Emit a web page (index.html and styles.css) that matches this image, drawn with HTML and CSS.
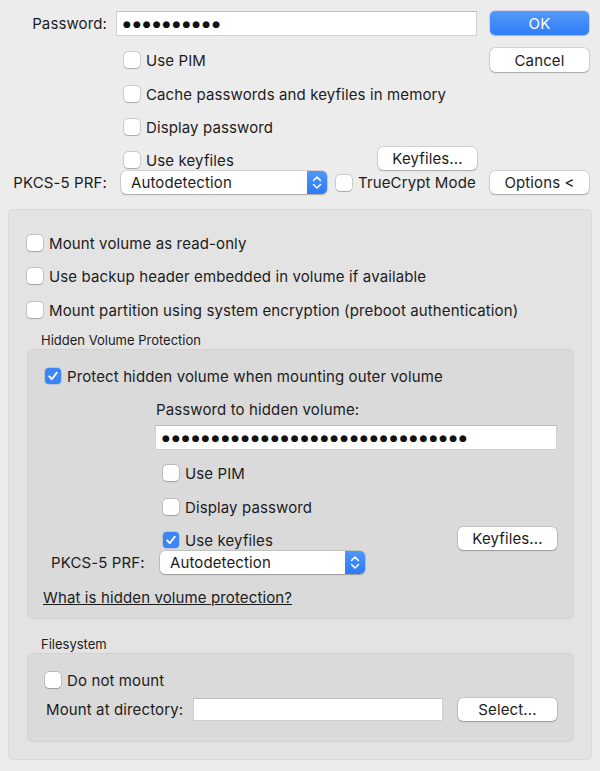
FILE: index.html
```html
<!DOCTYPE html>
<html>
<head>
<meta charset="utf-8">
<link rel="stylesheet" href="styles.css">
</head>
<body>
<div class="top">
  <div class="trow r1">
    <div class="tlabel">Password:</div>
    <div class="tmain"><div class="field wide"><span class="dots">●●●●●●●●●●</span></div></div>
    <div class="tside"><div class="btn primary">OK</div></div>
  </div>
  <div class="trow r2">
    <div class="tlabel"></div>
    <div class="tmain"><div class="check indent"><span class="box"></span>Use PIM</div></div>
    <div class="tside"><div class="btn">Cancel</div></div>
  </div>
  <div class="trow r3">
    <div class="tlabel"></div>
    <div class="tmain"><div class="check indent"><span class="box"></span>Cache passwords and keyfiles in memory</div></div>
  </div>
  <div class="trow r4">
    <div class="tlabel"></div>
    <div class="tmain"><div class="check indent"><span class="box"></span>Display password</div></div>
  </div>
  <div class="trow r5">
    <div class="tlabel"></div>
    <div class="tmain split"><div class="check indent low"><span class="box"></span>Use keyfiles</div><div class="btn">Keyfiles...</div></div>
  </div>
  <div class="trow r6">
    <div class="tlabel">PKCS-5 PRF:</div>
    <div class="tmain">
      <div class="select top-select"><span>Autodetection</span><span class="stepper"><svg width="20" height="23" viewBox="0 0 20 23"><path d="M6.5 9.5 L10 6 L13.5 9.5 M6.5 13.5 L10 17 L13.5 13.5" fill="none" stroke="#fff" stroke-width="1.5" stroke-linecap="round" stroke-linejoin="round"/></svg></span></div>
      <div class="check tc"><span class="box"></span>TrueCrypt Mode</div>
    </div>
    <div class="tside"><div class="btn">Options &lt;</div></div>
  </div>
</div>

<div class="panel">
  <div class="prow pa"><div class="check"><span class="box"></span>Mount volume as read-only</div></div>
  <div class="prow pb"><div class="check"><span class="box"></span>Use backup header embedded in volume if available</div></div>
  <div class="prow pc"><div class="check"><span class="box"></span>Mount partition using system encryption (preboot authentication)</div></div>

  <div class="grouplabel g1">Hidden Volume Protection</div>
  <div class="groupbox hidden">
    <div class="prow h1"><div class="check"><span class="box on"><svg width="16" height="16" viewBox="0 0 16 16"><path d="M4.2 8.3 L6.8 11.2 L11.8 4.6" fill="none" stroke="#fff" stroke-width="1.8" stroke-linecap="round" stroke-linejoin="round"/></svg></span>Protect hidden volume when mounting outer volume</div></div>
    <div class="prow h2"><div class="hlabel">Password to hidden volume:</div></div>
    <div class="field hfield"><span class="dots">●●●●●●●●●●●●●●●●●●●●●●●●●●●●●●●</span></div>
    <div class="prow h3"><div class="check hindent"><span class="box"></span>Use PIM</div></div>
    <div class="prow h4"><div class="check hindent"><span class="box"></span>Display password</div></div>
    <div class="prow h5 split"><div class="check hindent low"><span class="box on"><svg width="16" height="16" viewBox="0 0 16 16"><path d="M4.2 8.3 L6.8 11.2 L11.8 4.6" fill="none" stroke="#fff" stroke-width="1.8" stroke-linecap="round" stroke-linejoin="round"/></svg></span>Use keyfiles</div><div class="btn">Keyfiles...</div></div>
    <div class="prow h6">
      <div class="plabel">PKCS-5 PRF:</div>
      <div class="select hsel"><span>Autodetection</span><span class="stepper"><svg width="20" height="23" viewBox="0 0 20 23"><path d="M6.5 9.5 L10 6 L13.5 9.5 M6.5 13.5 L10 17 L13.5 13.5" fill="none" stroke="#fff" stroke-width="1.5" stroke-linecap="round" stroke-linejoin="round"/></svg></span></div>
    </div>
    <div class="prow h7"><a class="link">What is hidden volume protection?</a></div>
  </div>

  <div class="grouplabel g2">Filesystem</div>
  <div class="groupbox fs">
    <div class="prow f1"><div class="check"><span class="box"></span>Do not mount</div></div>
    <div class="prow f2">
      <div class="mlabel">Mount at directory:</div>
      <div class="field dirfield"></div>
      <div class="btn selbtn">Select...</div>
    </div>
  </div>
</div>
</body>
</html>
```

FILE: styles.css
```css
* { box-sizing: border-box; }
html, body { margin: 0; padding: 0; }
body {
  width: 600px;
  height: 771px;
  overflow: hidden;
  background: #ececec;
  font-family: Inter, "Noto Sans", "Liberation Sans", sans-serif;
  font-size: 15px;
  letter-spacing: 0.12px;
  color: #1c1c1c;
}

.top { padding-top: 11px; }
.trow { display: flex; align-items: center; height: 24px; }
.r1 { height: 25px; }
.r2 { margin-top: 12px; }
.r3 { margin-top: 10px; }
.r4 { margin-top: 9px; }
.r5 { margin-top: 8px; height: 23px; }
.r6 { margin-top: 1px; height: 23px; }

.tlabel { width: 107px; text-align: right; flex: none; }
.tmain { width: 361px; margin-left: 9px; display: flex; align-items: center; flex: none; height: 100%; }
.tmain.split { justify-content: space-between; }
.tside { width: 99px; margin-left: 13px; flex: none; height: 100%; }

.field {
  background: #fff;
  border: 1px solid #cfcfcf;
  border-top-color: #bdbdbd;
  height: 25px;
  display: flex;
  align-items: center;
  padding-left: 6px;
}
.field.wide { width: 361px; }
.dots {
  font-family: "DejaVu Sans", sans-serif;
  font-size: 9px;
  letter-spacing: 2.05px;
  color: #111;
}

.btn {
  background: #fff;
  border-radius: 5px;
  box-shadow: 0 0 0 0.5px rgba(0,0,0,0.22), 0 1px 1.5px rgba(0,0,0,0.2);
  height: 23px;
  width: 99px;
  display: flex;
  align-items: center;
  justify-content: center;
  flex: none;
}
.r1 .btn, .r2 .btn { height: 24px; }
.btn.primary {
  background: linear-gradient(#559bf9, #2f7cf6);
  color: #fff;
  box-shadow: 0 0 0 0.5px rgba(0,60,200,0.25), 0 1px 1.5px rgba(0,0,0,0.15);
  height: 24px;
}

.check { display: flex; align-items: center; height: 24px; white-space: nowrap; }
.check.indent { margin-left: 8px; }
.check.low { position: relative; top: 1.5px; }
.box {
  width: 16px;
  height: 16px;
  border-radius: 4px;
  background: #fff;
  box-shadow: 0 0 0 0.5px rgba(0,0,0,0.25), 0 0.5px 1px rgba(0,0,0,0.18);
  margin-right: 6px;
  flex: none;
  display: flex;
}
.box.on { background: #3b86f7; box-shadow: 0 0 0 0.5px rgba(0,60,200,0.3); }

.select {
  background: #fff;
  border-radius: 5px;
  box-shadow: 0 0 0 0.5px rgba(0,0,0,0.22), 0 1px 1.5px rgba(0,0,0,0.2);
  height: 23px;
  display: flex;
  align-items: center;
  justify-content: space-between;
  padding-left: 10px;
  flex: none;
}
.top-select { width: 206px; margin-left: 5px; }
.stepper {
  width: 20px;
  height: 23px;
  background: linear-gradient(#4f97f9, #2d7af6);
  border-radius: 0 5px 5px 0;
  display: flex;
}
.check.tc { margin-left: 9px; }

.panel {
  margin: 15px 0 0 8px;
  width: 584px;
  height: 551px;
  background: #e3e3e3;
  border: 1px solid #dadada;
  border-radius: 5px;
  padding: 21px 17px 0 18px;
}
.prow { display: flex; align-items: center; height: 24px; }
.pb { margin-top: 9px; }
.pc { margin-top: 10px; }

.grouplabel { font-size: 13px; letter-spacing: 0; height: 16px; line-height: 16px; margin-left: 14px; }
.g1 { margin-top: 10px; }
.g2 { margin-top: 17px; }

.groupbox {
  margin-top: 1px;
  width: 547px;
  background: #dadada;
  border: 1px solid #d2d2d2;
  border-radius: 5px;
  padding-left: 17px;
  padding-right: 16px;
}
.hidden { height: 270px; padding-top: 14px; }
.h2 { margin-top: 9px; }
.hlabel { margin-left: 111px; }
.hfield { margin-top: 4px; margin-left: 110px; width: 402px; }
.h3 { margin-top: 11px; }
.h4 { margin-top: 10px; }
.h5 { margin-top: 8px; height: 23px; }
.split { justify-content: space-between; }
.hindent { margin-left: 118px; }
.h6 { margin-top: 1px; height: 23px; }
.plabel { margin-left: 6px; width: 109px; flex: none; }
.hsel { width: 205px; }
.h7 { margin-top: 11px; }
.link { text-decoration: underline; margin-left: -2px; color: #1c1c1c; }

.fs { height: 89px; padding-top: 14px; }
.f2 { margin-top: 6px; height: 23px; }
.mlabel { margin-left: 1px; width: 147px; flex: none; }
.dirfield { width: 251px; height: 23px; }
.selbtn { margin-left: 15px; }
```
